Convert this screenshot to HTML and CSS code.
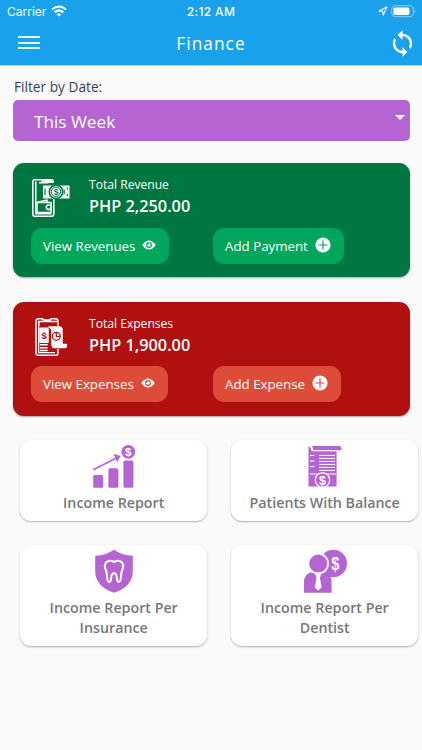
FILE: index.html
```html
<!DOCTYPE html>
<html lang="en">
<head>
<meta charset="utf-8">
<title>Finance</title>
<link rel="stylesheet" href="styles.css">
</head>
<body>
<header class="header">
  <div class="status">
    <div class="carrier"><span>Carrier</span>
      <svg width="16" height="12" viewBox="0 0 16 12" fill="none" stroke="#fff" stroke-width="2"><path d="M1 4.6Q8-1.6 15 4.6M3.6 7.3Q8 3.4 12.4 7.3"/><path d="M5.6 9.2Q8 7.2 10.4 9.2L8 11.6Z" fill="#fff" stroke="none"/></svg>
    </div>
    <div class="clock">2:12 AM</div>
    <div class="power">
      <svg width="10" height="10" viewBox="0 0 10 10" fill="none" stroke="#fff" stroke-width="1.1" stroke-linejoin="round"><path d="M1 5.1L9 1 5.2 9 4.7 5.3Z"/></svg>
      <svg width="26" height="13" viewBox="0 0 26 13"><rect x=".7" y=".7" width="21.6" height="11" rx="3.3" fill="none" stroke="#8fd0f6"/><rect x="2.4" y="2.4" width="16" height="7.6" rx="1.6" fill="#fff"/><path d="M23.6 4.2Q25.6 6.2 23.6 8.2Z" fill="#8fd0f6"/></svg>
    </div>
  </div>
  <div class="nav">
    <div class="menu"><i></i><i></i><i></i></div>
    <h1>Finance</h1>
    <svg class="sync" width="29" height="29" viewBox="0 0 24 24" fill="#fff"><path d="M12 4V1L8 5l4 4V6c3.31 0 6 2.69 6 6 0 1.01-.25 1.97-.7 2.8l1.46 1.46C19.54 15.03 20 13.57 20 12c0-4.42-3.58-8-8-8zm0 14c-3.31 0-6-2.69-6-6 0-1.01.25-1.97.7-2.8L5.24 7.74C4.46 8.97 4 10.43 4 12c0 4.42 3.58 8 8 8v3l4-4-4-4v3z"/></svg>
  </div>
</header>
<main>
  <div class="filter-label">Filter by Date:</div>
  <div class="select"><span>This Week</span><i class="caret"></i></div>

  <section class="summary revenue">
    <div class="top">
      <svg class="sum-icon" width="40" height="40" viewBox="0 0 40 40" fill="none" stroke="#fff" stroke-width="1.6" stroke-linejoin="round">
        <path d="M11 4V1.8H4Q1.8 1.8 1.8 4V36Q1.8 38.3 4 38.3H20.5Q22.8 38.3 22.8 36V20" />
        <path d="M4.8 3.5V35.8H20.5M8 4.7h9.5" stroke-width="1.5"/>
        <path d="M11 1h10q2 0 2 4H13Z" fill="#fff" stroke="none"/>
        <rect x="12" y="7.5" width="26.5" height="13" fill="#fff" stroke="none"/>
        <path d="M14 10.5v6.5M36.3 9.5v2M36.3 16v2M33.2 11.5v4.7" stroke="#007640" stroke-width="1.2"/>
        <circle cx="25" cy="13.8" r="6.7" fill="#fff" stroke="#007640"/><circle cx="25" cy="13.8" r="4.7" stroke="#007640" fill="#fff" stroke-width="1"/>
        <text x="25" y="17" text-anchor="middle" class="glyph" font-size="8.5" fill="#007640" stroke="none">$</text>
        <path d="M6 24.5h14v10H6Z" fill="#007640"/><path d="M20 27h-3.5q-2.4 2.2 0 4.4H20Z" fill="#007640"/><path d="M6 24.5l10-2.5v2.5"/>
      </svg>
      <div><div class="caption">Total Revenue</div><div class="amount">PHP 2,250.00</div></div>
    </div>
    <div class="actions">
      <div class="button view"><span>View Revenues</span><svg width="14" height="10" viewBox="0 0 14 10"><path d="M.2 5Q7-4 13.8 5Q7 14 .2 5Z" fill="#fff"/><circle cx="7" cy="5" r="2.4" fill="none" stroke="#00a65a" stroke-width="1.2"/><path d="M4.6 5H7V2.7" stroke="#fff" stroke-width="1"/></svg></div>
      <div class="button add"><span>Add Payment</span><svg width="16" height="16" viewBox="0 0 16 16"><circle cx="8" cy="8" r="7.6" fill="#fff"/><path d="M8 3.6v8.8M3.6 8h8.8" stroke="#00a65a" stroke-width="1.2"/></svg></div>
    </div>
  </section>

  <section class="summary expense">
    <div class="top">
      <svg class="sum-icon" width="40" height="40" viewBox="0 0 40 40" fill="none" stroke="#fff" stroke-width="1.5" stroke-linejoin="round">
        <path d="M13 3L11 1.7H7.5Q5 1.7 5 4.2V35.8Q5 38.3 7.5 38.3H25Q27 38.3 27 36V32M7.7 9V4.5H26M27 9V4Q27 1.7 24 1.7H20L19 3H13"/>
        <path d="M7.7 4V35.7H24" stroke-width="1.2"/>
        <path d="M9 11.3h8v14H9Z" fill="#fff"/><text x="13.2" y="22.3" text-anchor="middle" class="glyph" font-size="9.5" fill="#b01010" stroke="none">$</text>
        <path d="M9 27.7h7.7M9 30.7h7.7M9 33.4h7.7"/>
        <path d="M18 10h10q3 0 3 3v14.4h4.4v1.2q0 2-2 2H23q-2 0-2-2.5V14q0-3-3-4Z" fill="#fff"/>
        <path d="M18.5 11v16q0 3 3 3" stroke="#b01010" stroke-width=".8"/>
        <circle cx="25.3" cy="19.3" r="4" stroke="#b01010" stroke-width="1.2"/><path d="M25.3 15.5v3.8h3.7" stroke="#b01010" stroke-width="1.2"/>
      </svg>
      <div><div class="caption">Total Expenses</div><div class="amount">PHP 1,900.00</div></div>
    </div>
    <div class="actions">
      <div class="button view"><span>View Expenses</span><svg width="14" height="10" viewBox="0 0 14 10"><path d="M.2 5Q7-4 13.8 5Q7 14 .2 5Z" fill="#fff"/><circle cx="7" cy="5" r="2.4" fill="none" stroke="#dd4b39" stroke-width="1.2"/><path d="M4.6 5H7V2.7" stroke="#fff" stroke-width="1"/></svg></div>
      <div class="button add"><span>Add Expense</span><svg width="16" height="16" viewBox="0 0 16 16"><circle cx="8" cy="8" r="7.6" fill="#fff"/><path d="M8 3.6v8.8M3.6 8h8.8" stroke="#dd4b39" stroke-width="1.2"/></svg></div>
    </div>
  </section>

  <div class="tiles">
    <div class="tile">
      <svg width="44" height="44" viewBox="0 0 44 44" fill="#b565d2"><rect x="1.2" y="31" width="10" height="12.8" rx="1.6"/><rect x="16.4" y="24.3" width="10" height="19.5" rx="1.6"/><rect x="31.4" y="16.6" width="10" height="27.2" rx="1.6"/><path d="M1.2 25.8L24.5 14" stroke="#b565d2" stroke-width="1.7"/><path d="M21.5 9.7L28.7 11.9 25.1 18.3Z"/><circle cx="36.3" cy="7.8" r="6.9"/><text x="36.3" y="11.9" text-anchor="middle" class="glyph" font-size="11.5" fill="#fff">$</text></svg>
      <span>Income Report</span>
    </div>
    <div class="tile">
      <svg width="44" height="44" viewBox="0 0 44 44" fill="#b565d2"><path d="M5.5 2.3Q8 3 8.5 7H33.6V42.6H5.5Z"/><path d="M8.3 2H36q2.3 0 2.3 2.6v1.7H10.2Q10.3 3 8.3 2Z"/><path d="M9.5 6.8H34M7 11.4h4.5M7 17h4.5M7 22.6h4.5M16 11.4h16M16 14.4h16M16 17.4h16M16 20.4h16M16 23.4h16M16 26.4h16M7 30h26" stroke="#fff" stroke-width="1"/><circle cx="19.5" cy="36" r="7.2" stroke="#fff" stroke-width="1.3"/><text x="19.5" y="40.5" text-anchor="middle" class="glyph" font-size="12.5" fill="#fff">$</text></svg>
      <span>Patients With Balance</span>
    </div>
    <div class="tile">
      <svg width="44" height="44" viewBox="0 0 44 44" fill="#b565d2"><path d="M22 .8Q30.5 6.6 40.8 6.7V22Q40.8 37.5 22 43.8Q3.2 37.5 3.2 22V6.7Q13.5 6.6 22 .8Z"/><path d="M16.9 12Q18.8 11.2 22 13Q25.3 11.2 27.2 12Q32.4 13.2 30.8 19.5Q29.3 22.5 29 27Q28.7 32.8 26.7 33Q25.1 33 24.8 29Q24.6 24.3 22 24.3Q19.4 24.3 19.2 29Q18.9 33 17.3 33Q15.3 32.8 15 27Q14.7 22.5 13.2 19.5Q11.6 13.2 16.9 12Z" fill="none" stroke="#fff" stroke-width="2"/></svg>
      <span>Income Report Per<br>Insurance</span>
    </div>
    <div class="tile">
      <svg width="44" height="44" viewBox="0 0 44 44" fill="#b565d2"><circle cx="30.3" cy="14.5" r="13.7"/><path d="M.9 43.8V34Q.9 24 10 22.8H20.5Q28.6 24 28.6 34v9.8Z"/><path d="M12.3 25h5.8l-1.2 4 1.7 9.5-3.4 3-3.4-3 1.7-9.5Z" fill="#fff"/><circle cx="15.2" cy="14.6" r="9.9" stroke="#fff" stroke-width="1.8"/><text x="0" y="0" text-anchor="middle" transform="translate(32.2 20.8) scale(.8 1)" class="glyph" font-size="18" fill="#fff">$</text></svg>
      <span>Income Report Per<br>Dentist</span>
    </div>
  </div>
</main>
</body>
</html>
```
FILE: styles.css
```css
* { box-sizing: border-box; }
body { margin: 0; min-height: 750px; background: #fafafa; font-family: "Open Sans", sans-serif; }
svg { display: block; flex: none; }
.glyph { font-family: "Liberation Sans", sans-serif; font-weight: bold; }
.header { height: 66px; background: #1aa1eb; border-bottom: 1px solid #a9dcf8; color: #fff; }
.status { height: 22px; display: grid; grid-template-columns: 1fr auto 1fr; align-items: center; font-family: Inter, sans-serif; font-size: 12px; }
.carrier { display: flex; align-items: center; gap: 5px; padding-left: 7px; }
.clock { font-weight: 500; letter-spacing: .35px; }
.power { display: flex; align-items: center; justify-content: flex-end; gap: 3px; padding-right: 5px; }
.nav { height: 43px; display: grid; grid-template-columns: 1fr auto 1fr; align-items: center; padding: 0 5px 0 18px; }
.menu { display: grid; gap: 3.5px; width: 22px; margin-top: -2px; }
.menu i { height: 2px; background: #e8f7ff; }
h1 { margin: 0 0 0 -13px; font-size: 17.3px; font-weight: 400; letter-spacing: 1.05px; }
.sync { justify-self: end; margin-top: -1px; }
main { padding: 10px 12px 0 13px; }
.filter-label { height: 24px; padding-left: 1px; line-height: 21px; font-size: 13.7px; color: #374151; }
.select { height: 41px; display: flex; align-items: center; justify-content: space-between; padding: 0 5px 0 21px; border-radius: 5px; background: #b565d2; color: #fff; font-size: 17.2px; }
.select span { padding-top: 1px; }
.caret { border: 5px solid transparent; border-top-color: #fff; border-bottom: 0; margin-top: -6px; }
.summary { height: 114px; margin: 22px 0 0 -.5px; padding: 11px 18.5px; border-radius: 11px; color: #fff; box-shadow: 0 1px 2px rgba(0,0,0,.35); width: 397.5px; }
.summary + .summary { margin-top: 24.6px; }
.revenue { background: #007640; }
.expense { background: #b01010; }
.top { display: flex; gap: 18px; height: 54px; }
.expense .top { height: 53.5px; }
.sum-icon { margin-top: 4px; }
.caption { font-size: 12.1px; line-height: 21px; height: 20px; }
.amount { font-size: 16.3px; line-height: 24px; font-weight: 600; }
.actions { display: flex; white-space: nowrap; }
.button { height: 36px; display: flex; align-items: center; gap: 7px; padding: 0 12px; border-radius: 11px; font-size: 13.3px; }
.button span { padding-bottom: 1px; }
.button svg { margin-top: -2px; }
.revenue .button { background: #00a65a; }
.expense .button { background: #dd4b39; }
.revenue .view { width: 138px; margin-right: 44px; }
.expense .view { width: 137px; margin-right: 45px; }
.revenue .add { width: 130.5px; }
.expense .add { width: 128px; }
.tiles { display: grid; grid-template-columns: 187px 187px; gap: 24px; margin: 24.4px 0 0 7.2px; }
.tile { display: flex; flex-direction: column; align-items: center; gap: 3px; padding: 4px 0 7.5px; border-radius: 11px; background: #fff; box-shadow: 0 1px 2px rgba(0,0,0,.3); color: #777; font-size: 14.25px; line-height: 20.5px; font-weight: 600; text-align: center; }
.tile span { margin-top: 2px; }
```
